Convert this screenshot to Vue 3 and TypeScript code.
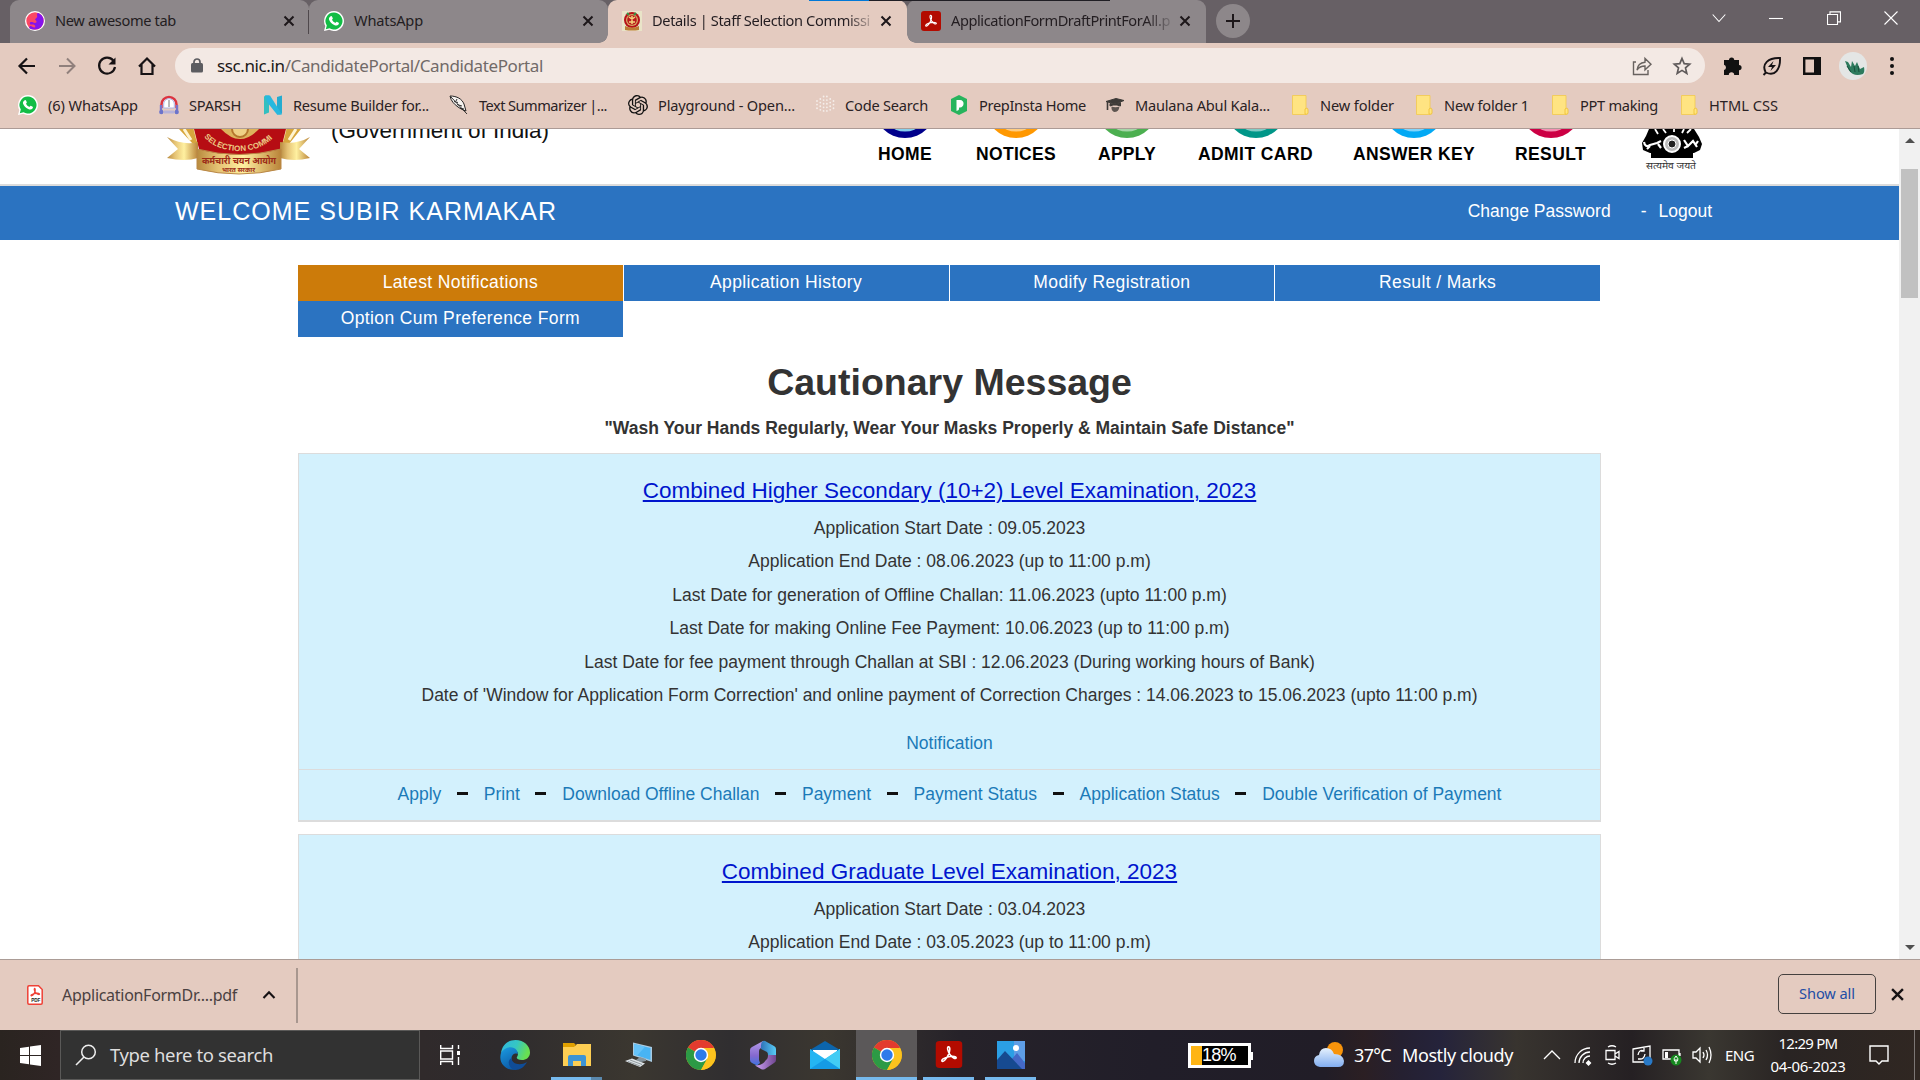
<script setup lang="ts">
import type { Directive } from 'vue'

const vFit: Directive<HTMLElement, number> = {
  mounted(el, binding) {
    const count = (el.textContent ?? '').trim().length
    el.style.letterSpacing = '0px'
    const natural = el.getBoundingClientRect().width
    if (count > 0 && binding.value) {
      el.style.letterSpacing = `${((binding.value - natural) / count).toFixed(3)}px`
    }
  },
}

interface Tab { title: string; icon: string; active?: boolean; w: number; cut?: boolean }
const tabs: Tab[] = [
  { title: 'New awesome tab', icon: 'awesome', w: 121 },
  { title: 'WhatsApp', icon: 'whatsapp', w: 69 },
  { title: 'Details | Staff Selection Commissi', icon: 'ssc', active: true, w: 218, cut: true },
  { title: 'ApplicationFormDraftPrintForAll.p', icon: 'acrobat', w: 219, cut: true },
]

interface Bookmark { label: string; icon: string; w: number; slot: number }
const bookmarks: Bookmark[] = [
  { label: '(6) WhatsApp', icon: 'whatsapp', w: 90, slot: 141 },
  { label: 'SPARSH', icon: 'sparsh', w: 52, slot: 104 },
  { label: 'Resume Builder for...', icon: 'novo', w: 136, slot: 186 },
  { label: 'Text Summarizer |...', icon: 'feather', w: 128, slot: 179 },
  { label: 'Playground - Open...', icon: 'gpt', w: 137, slot: 187 },
  { label: 'Code Search', icon: 'dots', w: 83, slot: 134 },
  { label: 'PrepInsta Home', icon: 'prep', w: 107, slot: 156 },
  { label: 'Maulana Abul Kala...', icon: 'grad', w: 135, slot: 185 },
  { label: 'New folder', icon: 'folder', w: 74, slot: 124 },
  { label: 'New folder 1', icon: 'folder', w: 85, slot: 136 },
  { label: 'PPT making', icon: 'folder', w: 78, slot: 129 },
  { label: 'HTML CSS', icon: 'folder', w: 69, slot: 110 },
]

const nav = [
  { label: 'HOME', color: '#00008b', inner: '#87ceeb', w: 54, gap: 0 },
  { label: 'NOTICES', color: '#ff9800', inner: '#ffcc80', w: 80, gap: 44 },
  { label: 'APPLY', color: '#4caf50', inner: '#a5d6a7', w: 58, gap: 42 },
  { label: 'ADMIT CARD', color: '#009688', inner: '#80cbc4', w: 115, gap: 42 },
  { label: 'ANSWER KEY', color: '#03a9f4', inner: '#81d4fa', w: 122, gap: 40 },
  { label: 'RESULT', color: '#cc0044', inner: '#f48fb1', w: 71, gap: 40 },
]

const sections = ['Latest Notifications', 'Application History', 'Modify Registration', 'Result / Marks', 'Option Cum Preference Form']

const exams = [
  {
    title: 'Combined Higher Secondary (10+2) Level Examination, 2023',
    lines: [
      'Application Start Date : 09.05.2023',
      'Application End Date : 08.06.2023 (up to 11:00 p.m)',
      'Last Date for generation of Offline Challan: 11.06.2023 (upto 11:00 p.m)',
      'Last Date for making Online Fee Payment: 10.06.2023 (up to 11:00 p.m)',
      'Last Date for fee payment through Challan at SBI : 12.06.2023 (During working hours of Bank)',
      "Date of 'Window for Application Form Correction' and online payment of Correction Charges : 14.06.2023 to 15.06.2023 (upto 11:00 p.m)",
    ],
    links: ['Apply', 'Print', 'Download Offline Challan', 'Payment', 'Payment Status', 'Application Status', 'Double Verification of Payment'],
  },
  {
    title: 'Combined Graduate Level Examination, 2023',
    lines: ['Application Start Date : 03.04.2023', 'Application End Date : 03.05.2023 (up to 11:00 p.m)'],
    links: [],
  },
]

const apps = [
  { icon: 'edge' },
  { icon: 'explorer', state: 'multi' },
  { icon: 'remote' },
  { icon: 'chrome' },
  { icon: 'm365' },
  { icon: 'mail' },
  { icon: 'chrome', state: 'active' },
  { icon: 'acrobat', state: 'open' },
  { icon: 'photos', state: 'open' },
]
</script>

<template>
  <div class="screen">
    <svg class="defs" width="0" height="0">
      <symbol id="whatsapp" viewBox="0 0 20 20">
        <path d="M10 0a10 10 0 1 1-4.8 18.8L0 20l1.300-5.100A10 10 0 0 1 10 0z" fill="#fff" />
        <path d="M10 1.500a8.500 8.500 0 1 1-4.500 15.700L1.800 18.200l1-3.600A8.500 8.500 0 0 1 10 1.500z" fill="#12bd45" />
        <path d="M6.700 5.200c.5-.4 1-.3 1.300.3l.8 1.700c.1.500-.6 1.100-.8 1.500.8 1.500 1.800 2.500 3.400 3.200.5-.4.900-1.300 1.400-1.100l1.900 1c.4.300.2 1.100-.2 1.700-1 1.200-2.500 1.300-4.300.5-2.500-1.100-4.400-3.200-5.100-5.200-.5-1.500.3-2.700 1.600-3.600z" fill="#fff" />
      </symbol>
      <symbol id="awesome" viewBox="0 0 20 20">
        <circle cx="10" cy="10" r="10" fill="#fff" /><circle cx="10" cy="10" r="8.700" fill="#fb4863" />
        <path d="M13 1.900a8.700 8.700 0 0 1-8.500 15.500c-.8-2 1.200-3 2.800-1.700 2.500 2 4-.3 2.200-1.700-1.500-1.200-4.500.5-4.700-1.600-.1-1.600 2-1.500 3.400-.9 2.800 1.200 4.500-.5 2.500-2.200C9 8 12 7 12.200 5.700 12.400 4.400 11 3 13 1.900z" fill="#8413ec" />
        <path d="M13 1.900c4 1.300 6 5 5.500 9-.5 3.500-3 6.500-7 7.600 2-2 0-3 1-4.500s2-2 1-4 2-3 0-5z" fill="#8413ec" />
      </symbol>
      <symbol id="ssc" viewBox="0 0 20 20">
        <rect width="20" height="20" fill="#e9e4c8" /><circle cx="10" cy="9" r="8" fill="#b71219" /><circle cx="10" cy="9" r="6" fill="#d8ac64" /><circle cx="10" cy="9" r="4.800" fill="#b91a1c" />
        <path d="M7 6l3 2 3-2M10 5v8M7 11h6" stroke="#f5d27d" stroke-width="1.500" fill="none" /><path d="M3 15q7 3 14 0v4q-7 1-14 0z" fill="#bd7b35" /><path d="M5 2l2 2M14 2l-2 2" stroke="#379548" stroke-width="2" />
      </symbol>
      <symbol id="acrobat" viewBox="0 0 20 20">
        <rect width="20" height="20" rx="3" fill="#b30b00" />
        <path d="M9.500 4.300c1.500-.3 1.500 3-.1 6.200-1.400 3-3.600 5-4.500 4.600-1-.7 1.300-2.900 5-3.500 3.300-.6 5.700-.1 5.400 1-.4 1.100-3-.2-4.500-2.400C9.100 8.100 8.400 4.700 9.500 4.300z" fill="none" stroke="#fff" stroke-width="1.150" />
      </symbol>
      <symbol id="sparsh" viewBox="0 0 20 20">
        <path d="M2.500 13V9.500a7.500 7.500 0 0 1 15 0V13" fill="#f4f4fb" stroke="#dc3440" stroke-width="2.500" /><path d="M2 10v5M18 10v5" stroke="#7975c9" stroke-width="2.400" /><path d="M4.700 13V9a5.300 5.300 0 0 1 10.600 0v4z" fill="#fff" stroke="#adb6e4" /><path d="M10 5v7" stroke="#777" /><circle cx="2.300" cy="17" r="2.200" fill="#6c74cb" /><circle cx="17.700" cy="17" r="2.200" fill="#6c74cb" /><path d="M5 17h10" stroke="#b6b2d9" stroke-width="3" />
      </symbol>
      <symbol id="novo" viewBox="0 0 20 20">
        <path d="M1 2q0-1.500 2-1.500h3v17l-5 2z" fill="#32bfc0" /><path d="M14 2l5-1.500v17q0 2-2 2h-3z" fill="#25acd0" /><path d="M2 .5h5l12 19h-5L4 7z" fill="#27b8df" />
      </symbol>
      <symbol id="feather" viewBox="0 0 20 20">
        <path d="M1 1c7 0 12 3 14 8l2 7c-3-1-5-2-8-4C5 9 2 6 1 1z" fill="#f6f3f0" stroke="#222" stroke-width="1" /><path d="M2 2l16 17M5 6.500l4 1M8 9.500l5 1.500M11 13l4 1M8 4l-1 2" stroke="#222" stroke-width=".9" fill="none" />
      </symbol>
      <symbol id="gpt" viewBox="0 0 24 24">
        <path fill="#111" d="M22.280 9.820a5.980 5.980 0 0 0-.52-4.910 6.050 6.050 0 0 0-6.510-2.900A6.070 6.070 0 0 0 4.980 4.180a5.980 5.980 0 0 0-4 2.900 6.050 6.050 0 0 0 .74 7.100 5.980 5.980 0 0 0 .51 4.910 6.050 6.050 0 0 0 6.510 2.900A5.980 5.980 0 0 0 13.260 24a6.060 6.060 0 0 0 5.770-4.210 5.990 5.990 0 0 0 4-2.900 6.060 6.060 0 0 0-.75-7.070zm-9.020 12.610a4.480 4.480 0 0 1-2.880-1.040l.14-.08 4.780-2.760a.8.8 0 0 0 .39-.68v-6.740l2.020 1.170a.07.07 0 0 1 .04.05v5.580a4.500 4.500 0 0 1-4.490 4.500zm-9.660-4.130a4.470 4.470 0 0 1-.53-3.010l.14.080 4.780 2.760a.77.77 0 0 0 .78 0l5.840-3.370v2.330a.08.08 0 0 1-.03.06L9.740 19.950a4.500 4.500 0 0 1-6.140-1.650zM2.340 7.900a4.490 4.490 0 0 1 2.370-1.970v5.670a.77.77 0 0 0 .39.680l5.810 3.350-2.020 1.170a.08.08 0 0 1-.07 0l-4.830-2.790A4.500 4.500 0 0 1 2.340 7.870zm16.600 3.860L13.100 8.360l2.020-1.160a.08.08 0 0 1 .07 0l4.830 2.790a4.490 4.490 0 0 1-.68 8.100v-5.680a.79.79 0 0 0-.4-.65zm2.010-3.020l-.14-.09-4.780-2.780a.78.78 0 0 0-.78 0L9.410 9.230V6.900a.07.07 0 0 1 .03-.06l4.830-2.790a4.500 4.500 0 0 1 6.680 4.660zM8.310 12.860l-2.020-1.160a.08.08 0 0 1-.04-.06V6.070a4.500 4.500 0 0 1 7.380-3.450l-.14.08L8.700 5.460a.8.8 0 0 0-.39.68zm1.100-2.360l2.600-1.500 2.610 1.500v3l-2.600 1.500-2.610-1.500z" />
      </symbol>
      <symbol id="dots" viewBox="0 0 20 20">
        <g fill="none" stroke="#f5eeea" stroke-width="1.800" stroke-linecap="round" stroke-dasharray="0.01 3.600"><path d="M2 6v10M5.300 4v14M8.600 1.500v18M11.900 1.500v18M15.200 4v14M18.500 6v10" /></g>
      </symbol>
      <symbol id="prep" viewBox="0 0 20 20">
        <path d="M10 0l8 4v12l-8 4-8-4V4z" fill="#27b45d" /><path d="M7.500 16V5h3.500c5 0 4.500 7.500 0 7.500h-.8L9.700 15z" fill="#fff" />
      </symbol>
      <symbol id="grad" viewBox="0 0 20 20">
        <path d="M1 6.500l10-3 8 2-9 3.500zM5 8.500v2.500l3-1h4l3.500 1V7.500l-5.500 2z" fill="#3d3a37" stroke="#3d3a37" stroke-width="1" /><path d="M2.500 7v8" stroke="#3d3a37" stroke-width="1.600" /><path d="M6.500 11.500q4 1.500 8 0-.5 5.500-5.500 5.500-3-1.500-2.500-5.500z" fill="#5d5550" />
      </symbol>
      <symbol id="folder" viewBox="0 0 20 20">
        <path d="M2.500.5h13.500v19H2.500z" fill="#ffe482" stroke="#f2c94c" stroke-width=".8" /><path d="M15 19v-5q3-2 3 1v3q0 2-3 1z" fill="#ffe57f" stroke="#f0c238" stroke-width=".9" />
      </symbol>
      <symbol id="edge" viewBox="0 0 30 30">
        <defs><linearGradient id="eg1" x1="0" y1="0" x2="1" y2=".3"><stop offset="0" stop-color="#30b6df" /><stop offset=".55" stop-color="#35c6c4" /><stop offset="1" stop-color="#68df51" /></linearGradient><linearGradient id="eg2" x1="0" y1="0" x2=".5" y2="1"><stop offset="0" stop-color="#1b9ce2" /><stop offset="1" stop-color="#0c59a5" /></linearGradient></defs>
        <path d="M1 13C2 5 8 0 15.500 0 24 0 30 6 30 12.500c0 5-4 7.500-8 7.500-4 0-6-1.500-5-3 2-3 1-7-4-7S4 11 1 13z" fill="url(#eg1)" />
        <path d="M1 13c3-6 12-8 15.500-3 1 1.500 1.500 3 1 4-3-1.500-6 1-6 4.500 0 5 5 9 10 8-4 4-12 5-17.500-.5C-.5 22 0 16 1 13z" fill="url(#eg2)" />
        <path d="M11.500 18c0 5.500 8 8.500 15.500 4-2.500 5-7 8-12 8-5.500-1-9-9-3.500-12z" fill="#0f4c96" />
      </symbol>
      <symbol id="explorer" viewBox="0 0 30 30">
        <path d="M1 6h12l2-2h14v22H1z" fill="#fdce53" /><path d="M1 3h11l2 2-2 2H1z" fill="#e0a000" /><path d="M6 26v-9q0-2 2-2h14q2 0 2 2v9h-5v-5h-8v5z" fill="#3d94d5" />
      </symbol>
      <symbol id="remote" viewBox="0 0 30 30">
        <path d="M9 2.500l19 4.500v15L9 15.500z" fill="#a9cbe2" /><path d="M10 4l16.500 4v12L10 14.500z" fill="#48b4f4" /><path d="M10 4l11 2.700-8 9L10 14.500z" fill="#66c3f9" /><path d="M16 17l6 2v2l-5 1-5-2z" fill="#87959e" /><path d="M1 21l7-2.500 13 5-5 3.500z" fill="#dce3e7" /><path d="M6 20l12 4.500M4 21.500l12 4.500" stroke="#929a9e" />
      </symbol>
      <symbol id="chrome" viewBox="0 0 30 30">
        <circle cx="15" cy="15" r="15" fill="#fbbc15" /><path d="M15 15L2 7.500A15 15 0 0 1 28 7.500z" fill="#e33b2e" /><path d="M2 7.500A15 15 0 0 0 15 30l6.500-11.500L15 15z" fill="#2c9a45" /><path d="M15 8h13a15 15 0 0 1-13 22l6-11z" fill="#fcc31e" /><circle cx="15" cy="15" r="7.200" fill="#fff" /><circle cx="15" cy="15" r="5.700" fill="#2d7bea" />
      </symbol>
      <symbol id="m365" viewBox="0 0 30 30">
        <defs><linearGradient id="mg1" x2="0" y2="1"><stop offset="0" stop-color="#b59be8" /><stop offset=".6" stop-color="#8468cf" /><stop offset="1" stop-color="#3e74e0" /></linearGradient><linearGradient id="mg2"><stop offset="0" stop-color="#2f73b8" /><stop offset="1" stop-color="#57cbf5" /></linearGradient><linearGradient id="mg3"><stop offset="0" stop-color="#cfa4f8" /><stop offset="1" stop-color="#6f458f" /></linearGradient></defs>
        <path d="M15 1L4 7Q2 8 2 10v10q0 2 2 3l5 2.500 3-2.500-1-3v-9q0-2 2-3l5-3V2z" fill="url(#mg1)" />
        <path d="M15 1q-2 1-2 4v4l6 3q1 1 1 3l8 5V9q0-2-2-3L17 1q-1-.5-2 0z" fill="url(#mg2)" />
        <path d="M28 15v5q0 2-2 3l-9 6q-2 1-4 0l-6-3.500q6 0 9-3l2-2.500q2-1 2-5z" fill="url(#mg3)" />
      </symbol>
      <symbol id="mail" viewBox="0 0 30 30">
        <path d="M0 10L15 1l15 9v8H0z" fill="#0c65ac" /><path d="M3 10h24v9H3z" fill="#fff" /><path d="M0 9l15 10L30 9v20H0z" fill="#24b5f2" /><path d="M15 19L30 9v20z" fill="#42ccf4" /><path d="M15 19l15 10H0z" fill="#159be5" />
      </symbol>
      <symbol id="photos" viewBox="0 0 30 30">
        <rect x="1" y="1" width="28" height="28" fill="#2b9fe5" /><path d="M18 1h11v20H18z" fill="#5e9ee6" /><path d="M15 20l6-7 8 10v6H15z" fill="#4468c6" /><path d="M1 20l8-9 17 18H1z" fill="#164a90" /><circle cx="20" cy="8" r="3" fill="#fff" />
      </symbol>
    </svg>

    <header class="chrome">
      <div class="top-strip"></div>
      <div class="tabs">
        <div v-for="tab in tabs" :key="tab.title" class="tab" :class="{ active: tab.active }">
          <svg class="fav"><use :href="'#' + tab.icon" /></svg>
          <span class="tab-title" :class="{ cut: tab.cut }"><span v-fit="tab.w" class="ui">{{ tab.title }}</span></span>
          <svg class="x" viewBox="0 0 12 12"><path d="M1.500 1.500l9 9M10.500 1.500l-9 9" stroke="#1d171a" stroke-width="2" /></svg>
        </div>
        <div class="plus"><svg width="16" height="16" viewBox="0 0 16 16"><path d="M8 1v14M1 8h14" stroke="#1d171a" stroke-width="2" /></svg></div>
        <div class="win-buttons">
          <svg viewBox="0 0 14 14"><path d="M.7 3.500L7 10.500 13.300 3.500" /></svg>
          <svg viewBox="0 0 14 14"><path d="M0 7.500h14" /></svg>
          <svg viewBox="0 0 14 14"><path d="M.5 3.500h10v10H.5zM3 3.500V.9h10.500v10H11" /></svg>
          <svg viewBox="0 0 14 14"><path d="M.5.5l13 13M13.500.5l-13 13" /></svg>
        </div>
      </div>

      <div class="toolbar">
        <svg class="tool" viewBox="0 0 20 20"><path d="M18 10H3M10 2.500L2.500 10l7.500 7.500" stroke="#161214" stroke-width="2.200" fill="none" /></svg>
        <svg class="tool" viewBox="0 0 20 20"><path d="M2 10h15M10 2.500l7.500 7.500-7.500 7.500" stroke="#90807c" stroke-width="2" fill="none" /></svg>
        <svg class="tool" viewBox="0 0 20 20"><path d="M16.300 4.500A8 8 0 1 0 18 11" stroke="#161214" stroke-width="2.200" fill="none" /><path d="M18.500 1.500V8.500h-7z" fill="#161214" /></svg>
        <svg class="tool" viewBox="0 0 20 20"><path d="M2 10.500L10 2.500l8 8M4.500 8.500V18h11V8.500" stroke="#161214" stroke-width="2.200" fill="none" /></svg>
        <div class="omnibox">
          <svg width="12" height="15" viewBox="0 0 12 15"><path d="M3 6V4a3 3 0 0 1 6 0v2" stroke="#5c5c60" stroke-width="1.700" fill="none" /><rect y="5" width="12" height="9.500" rx="1.500" fill="#5c5c60" /></svg>
          <span v-fit="326" class="ui url"><b>ssc.nic.in</b>/CandidatePortal/CandidatePortal</span>
          <span class="grow"></span>
          <svg class="omni-icon" viewBox="0 0 20 20"><path d="M4 6H1.500v12.500h14.500V14M5 14c.5-5 4-7.500 8-7.800V2.500l6 5.800-6 5.500V10c-3.500 0-6 1-8 4z" fill="none" stroke="#68625f" stroke-width="1.400" /></svg>
          <svg class="omni-icon" viewBox="0 0 20 20"><path d="M10 2.500l2.200 5.200 5.500.5-4.200 3.700 1.300 5.500-4.800-3-4.800 3 1.300-5.500L2.300 8.200l5.500-.5z" fill="none" stroke="#5f5a5a" stroke-width="1.700" /></svg>
        </div>
        <div class="ext">
          <svg viewBox="0 0 20 20"><path d="M2 4h5a2.600 2.600 0 0 1 5.200 0H17v5a2.600 2.600 0 0 1 0 5.200V19h-4.800a2.700 2.700 0 0 0-5.400 0H2v-5a2.700 2.700 0 0 0 0-5.200z" fill="#111" /></svg>
          <svg viewBox="0 0 20 20"><path d="M3.500 16C-.5 8 6 1.500 18 2c.5 11-5 19-14 14.500L1.500 19" fill="none" stroke="#161214" stroke-width="1.900" /><path d="M11.500 5L6 11h4l-1.500 4L14 9h-4z" fill="#161214" /></svg>
          <svg viewBox="0 0 20 20"><path d="M2.200 2.200h15.600v15.600H2.200z" fill="none" stroke="#111" stroke-width="2.400" /><path d="M12 1h7v18h-7z" fill="#111" /></svg>
          <svg class="avatar" viewBox="0 0 28 28"><circle cx="14" cy="14" r="14" fill="#e4e6e5" /><path d="M6 9l3 1 3 5 1-6 3 5 2-4 2 5 1 2 4-2q1 5-1 7-6 2-10 0-4-2-6-8z" fill="#2d7b5d" /><path d="M8 14l4 6M15 14l1 6M19 14l1 6" stroke="#174f3b" /></svg>
          <svg class="more" viewBox="0 0 20 20"><circle cx="10" cy="3" r="2" fill="#111" /><circle cx="10" cy="10" r="2" fill="#111" /><circle cx="10" cy="17" r="2" fill="#111" /></svg>
        </div>
      </div>

      <div class="bookmarks">
        <div v-for="b in bookmarks" :key="b.label" class="bookmark" :style="{ width: b.slot + 'px' }">
          <svg class="fav"><use :href="'#' + b.icon" /></svg><span v-fit="b.w" class="ui">{{ b.label }}</span>
        </div>
      </div>
    </header>

    <div class="viewport">
      <div class="page">
        <div class="site-head">
          <svg class="seal" width="150" height="50" viewBox="0 0 150 50">
            <defs>
              <linearGradient id="gold" x1="0" x2="1"><stop offset="0" stop-color="#b88a3e" /><stop offset=".25" stop-color="#e5c274" /><stop offset=".55" stop-color="#fff0a0" /><stop offset="1" stop-color="#b98338" /></linearGradient>
              <path id="arc" d="M39 8Q52 22 74 22Q100 22 114 2" />
            </defs>
            <path d="M14 0h20l5 14-11 1zM116 0h20l-12 15-11-1z" fill="#d7a63c" /><path d="M19 0l7 11M30 0l3 12M131 0l-7 11M120 0l-3 12" stroke="#fff4d0" stroke-width="3" />
            <path d="M29 0h92L113 32H37z" fill="#b60d13" />
            <path d="M56 0q19 20 38 0z" fill="#ddb25c" /><circle cx="75" cy="0" r="8" fill="#efd086" stroke="#b4752d" stroke-width="2" />
            <path d="M2 8q17 9 31 5v16q-13 4-31 0l11-9z" fill="url(#gold)" /><path d="M145 8q-14 8-30 5v16q14 4 30 0l-11-9z" fill="url(#gold)" />
            <path d="M32 20q42 11 84 0v20q-42 10-84 0z" fill="url(#gold)" stroke="#ba8847" />
            <text font-size="8" font-weight="700" fill="#ecca84" font-family="Liberation Sans, sans-serif"><textPath href="#arc">SELECTION COMMI</textPath></text>
            <text x="37" y="35" font-size="9" font-weight="700" fill="#9b2b17" textLength="74" lengthAdjust="spacingAndGlyphs" font-family="Noto Sans, sans-serif">कर्मचारी चयन आयोग</text>
            <text x="57" y="42.500" font-size="6" font-weight="700" fill="#9b2b17" textLength="33" lengthAdjust="spacingAndGlyphs" font-family="Noto Sans, sans-serif">भारत सरकार</text>
          </svg>
          <div class="gov"><span v-fit="218">(Government of India)</span></div>
          <nav class="nav">
            <div v-for="n in nav" :key="n.label" class="nav-item" :style="{ width: n.w + 'px', marginLeft: n.gap + 'px' }">
              <svg width="62" height="9" viewBox="0 53 62 9"><circle cx="31" cy="31" r="31" :fill="n.color" /><circle cx="31" cy="31" r="24.500" :fill="n.inner" /></svg>
              <span v-fit="n.w">{{ n.label }}</span>
            </div>
          </nav>
          <svg class="emblem" width="62" height="44" viewBox="0 0 62 44">
            <path d="M8 0h45l5 8 3 7-2 6-6 3H9l-7-3-1-7 4-7zM10 23h42v6H10z" fill="#000" />
            <path d="M14 0l3 5M22 0l3 4M33 0v3M43 0l-2 4M50 0l-4 4" stroke="#fff" stroke-width="1.800" />
            <circle cx="31" cy="15" r="8" fill="#bbb" stroke="#fff" stroke-width="2" /><circle cx="31" cy="15" r="4" fill="#222" stroke="#fff" /><path d="M3 13q1 6 6 3l7-2 4-2M9 17l-3 3M17 15l3 4M43 11l4 6 5-5 4 6M47 17l-4 2M57 12l-2 3" stroke="#fff" stroke-width="2.200" fill="none" />
            <text x="5" y="40" font-size="9" fill="#333" textLength="50" lengthAdjust="spacingAndGlyphs" font-family="Noto Sans, sans-serif">सत्यमेव जयते</text>
          </svg>
        </div>

        <div class="welcome">
          <span v-fit="382" class="welcome-name">WELCOME SUBIR KARMAKAR</span>
          <span class="grow"></span>
          <span>Change Password</span><span class="hy">-</span><span>Logout</span>
        </div>

        <main class="content">
          <div class="sections">
            <div v-for="(s, i) in sections" :key="s" class="section" :class="{ current: i === 0 }">{{ s }}</div>
          </div>
          <h1>Cautionary Message</h1>
          <p class="caution">"Wash Your Hands Regularly, Wear Your Masks Properly &amp; Maintain Safe Distance"</p>

          <article v-for="e in exams" :key="e.title" class="exam">
            <h2><a>{{ e.title }}</a></h2>
            <p v-for="l in e.lines" :key="l">{{ l }}</p>
            <template v-if="e.links.length">
              <div class="notification">Notification</div>
              <div class="links">
                <template v-for="(l, i) in e.links" :key="l"><i v-if="i > 0"></i><a>{{ l }}</a></template>
              </div>
            </template>
          </article>
        </main>
      </div>
      <div class="scrollbar">
        <svg width="10" height="5" viewBox="0 0 10 5"><path d="M5 0l5 5H0z" fill="#505050" /></svg>
        <div class="thumb"></div>
        <span class="grow"></span>
        <svg width="10" height="5" viewBox="0 0 10 5"><path d="M0 0h10L5 5z" fill="#505050" /></svg>
      </div>
    </div>

    <div class="downloads">
      <svg class="pdf" width="16" height="20" viewBox="0 0 16 20"><path d="M2 .8h9.500L15.200 4.500V18q0 1.200-1.200 1.200H2Q.8 19.200.8 18V2Q.8.800 2 .8z" fill="#fff" stroke="#ee4136" stroke-width="1.500" /><path d="M7.500 3.500c1.300 0 .7 4-1.300 6.300-1.500 1.500-3 1-1.700 0 2.500-1.700 7-2 8-.8.300 1-2 .5-3.500-1C7.500 6.500 6.800 4 7.500 3.500z" fill="none" stroke="#ee4136" stroke-width="1.300" /><text x="4.200" y="16.500" font-size="4.600" font-weight="700" font-family="Liberation Sans, sans-serif" fill="#222">PDF</text></svg>
      <span class="file"><span v-fit="175" class="ui">ApplicationFormDr....pdf</span></span>
      <svg width="14" height="10" viewBox="0 0 14 10"><path d="M1.500 8L7 2.200 12.500 8" fill="none" stroke="#161214" stroke-width="2.100" /></svg>
      <div class="divider"></div>
      <span class="grow"></span>
      <div class="show-all"><span v-fit="56" class="ui">Show all</span></div>
      <svg class="close" width="13" height="13" viewBox="0 0 12 12"><path d="M1 1l10 10M11 1L1 11" stroke="#161214" stroke-width="2.200" /></svg>
    </div>

    <footer class="taskbar">
      <div class="start"><svg width="21" height="21" viewBox="0 0 21 21"><path d="M0 3l9-1.300V10H0zM10 1.500L21 0v10H10zM0 11h9v8.300L0 18zM10 11h11v10l-11-1.500z" fill="#fff" /></svg></div>
      <div class="search">
        <svg width="22" height="22" viewBox="0 0 22 22"><circle cx="13.500" cy="8" r="6.800" fill="none" stroke="#eee" stroke-width="1.500" /><path d="M9 13L1 21" stroke="#eee" stroke-width="1.600" /></svg>
        <span v-fit="163" class="ui">Type here to search</span>
      </div>
      <div class="task-view"><svg width="20" height="20" viewBox="0 0 20 20"><path d="M.7 0v3.500h11.800V0M.7 20v-3.500h11.800V20M.7 6h11.800v8H.7zM18.500 0v4M18.500 12v8" fill="none" stroke="#fff" stroke-width="1.400" /><path d="M17 6h3v4h-3z" fill="#fff" /></svg></div>
      <div class="apps">
        <div v-for="(a, i) in apps" :key="i" class="app" :class="a.state"><svg width="30" height="30"><use :href="'#' + a.icon" :x="a.icon === 'acrobat' ? 1.5 : 0" :y="a.icon === 'acrobat' ? 1 : 0" :width="a.icon === 'acrobat' ? 27 : 30" :height="a.icon === 'acrobat' ? 27 : 30" /></svg></div>
      </div>
      <div class="battery"><div class="level"></div><div class="pct">18%</div></div>
      <div class="weather">
        <svg width="30" height="26" viewBox="0 0 30 26"><defs><linearGradient id="cl" y2="1" x2="0"><stop offset="0" stop-color="#e5f1fd" /><stop offset="1" stop-color="#81adf0" /></linearGradient></defs><circle cx="21" cy="8" r="8" fill="#f8940b" /><path d="M6 25q-6-1-6-6 0-5 5-6 1-7 7-7 6 0 8 6 9 0 10 7 0 6-6 6z" fill="url(#cl)" /></svg>
        <span v-fit="37" class="ui">37°C</span><span v-fit="111" class="ui cond">Mostly cloudy</span>
      </div>
      <div class="tray">
        <svg viewBox="0 0 20 20"><path d="M2 14l8-8 8 8" /></svg>
        <svg viewBox="0 0 20 20"><path d="M3 18A15 15 0 0 1 18 3M7 18A11 11 0 0 1 18 7M11 18a7 7 0 0 1 7-7" /><path d="M14.500 18l2-2 2 2-2 2z" fill="#fff" /></svg>
        <svg viewBox="0 0 20 20"><path d="M4 5.500h9v9H4zM13 9l4-2.500v7L13 11M6 2q4-2.500 8 0M6 18q4 2.500 8 0" /></svg>
        <svg viewBox="0 0 20 20"><path d="M1 4l17-3v16H1z" /><path d="M12 6Q7 4 6 10M7 14q5 1 6-5M12 3v3H9M6 14h4" /><circle cx="16" cy="16" r="4.500" fill="#2879c7" stroke="none" /></svg>
        <svg viewBox="0 0 20 20"><path d="M1 5h16v9H1zM18 8v3" /><path d="M3 7h3v6H3z" fill="#fff" stroke="none" /><circle cx="14" cy="15" r="5.500" fill="#16891f" stroke="none" /><path d="M14 11q-3 3-1.500 5h3Q17 14 14 11zM14 14v5" stroke-width="1" /></svg>
        <svg viewBox="0 0 20 20"><path d="M1 7v6h3l4 4V3L4 7zM11 7q2 3 0 6M14 5q3 5 0 10M17 2q4 8 0 16" /></svg>
      </div>
      <span class="lang"><span v-fit="29" class="ui">ENG</span></span>
      <div class="clock"><div><span v-fit="59" class="ui">12:29 PM</span></div><div><span v-fit="75" class="ui">04-06-2023</span></div></div>
      <svg class="note" width="20" height="20" viewBox="0 0 20 20"><path d="M1 1h18v15h-6l-3 3-3-3H1z" fill="none" stroke="#fff" stroke-width="1.400" /></svg>
      <div class="peek"></div>
    </footer>
  </div>
</template>

<style>
body { margin: 0; background: #fff; overflow: hidden; }
</style>

<style scoped>
.screen { width: 1920px; height: 1080px; overflow: hidden; display: flex; flex-direction: column; font-family: "Liberation Sans", Arial, sans-serif; }
.screen svg { flex: none; display: block; }
.screen svg.defs { position: absolute; }
.ui { font-family: "Noto Sans", "Open Sans", sans-serif; white-space: pre; }
.grow { flex: 1; }

.chrome { height: 128px; flex: none; background: #e4cbc0; border-bottom: 1px solid #ac9b96; position: relative; }
.top-strip { position: absolute; left: 809px; top: 0; width: 301px; height: 1px; background: linear-gradient(90deg, #0078d7 60px, #201e24 60px); z-index: 3; }
.tabs { height: 43px; display: flex; background: #676065; padding-left: 10px; box-sizing: border-box; }
.tab { width: 299px; height: 43px; box-sizing: border-box; padding: 0 14px 2px 15px; display: flex; align-items: center; background: #8d878a; border-radius: 9px 9px 0 0; font-size: 14.600px; color: #231d21; position: relative; }
.tab:nth-child(n+3) { padding-left: 14px; padding-right: 15px; }
.tab:first-child::after { content: ""; position: absolute; right: 0; top: 10px; width: 1px; height: 24px; background: #4f484c; }
.tab:nth-child(2) { border-bottom-right-radius: 9px; }
.tab:nth-child(4) { border-bottom-left-radius: 9px; }
.tab.active { background: #e4cbc0; z-index: 1; }
.tab.active::before, .tab.active::after { content: ""; position: absolute; bottom: 0; width: 9px; height: 9px; }
.tab.active::before { left: -9px; background: radial-gradient(circle at 0 0, #8d878a 8.500px, #e4cbc0 9px); }
.tab.active::after { right: -9px; background: radial-gradient(circle at 100% 0, #8d878a 8.500px, #e4cbc0 9px); }
.fav { width: 20px; height: 20px; }
.tab-title { flex: 1; margin-left: 10px; margin-right: 7px; white-space: nowrap; line-height: 24px; }
.tab-title.cut { -webkit-mask-image: linear-gradient(90deg, #000 88%, rgba(0, 0, 0, .15) 100%); mask-image: linear-gradient(90deg, #000 88%, rgba(0, 0, 0, .15) 100%); }
.x { width: 12px; height: 12px; }
.plus { width: 34px; height: 34px; margin: 4px 0 0 10px; border-radius: 50%; background: #8d878a; display: flex; align-items: center; justify-content: center; }
.win-buttons { margin-left: auto; margin-right: 22px; padding-top: 11px; display: flex; gap: 43.500px; }
.win-buttons svg { width: 14px; height: 14px; fill: none; stroke: #fff; stroke-width: 1.100; }

.toolbar { height: 45px; display: flex; align-items: center; padding-left: 17px; }
.tool { width: 20px; height: 20px; margin-right: 20px; }
.omnibox { width: 1530px; height: 35px; margin-left: -2px; border-radius: 18px; background: #f3e9e4; display: flex; align-items: center; box-sizing: border-box; padding: 0 13px 0 16px; }
.url { font-size: 17px; color: #716a68; margin-left: 14px; line-height: 34px; }
.url b { font-weight: 400; color: #1b1718; }
.omni-icon { width: 20px; height: 20px; margin-left: 20px; }
.ext { display: flex; align-items: center; margin-left: 17px; gap: 20px; }
.ext svg { width: 20px; height: 20px; }
.ext .avatar { width: 28px; height: 28px; margin: 0 -3px; }
.ext .more { margin-left: -2px; }

.bookmarks { height: 38px; margin-top: -2px; display: flex; align-items: center; padding-left: 18px; }
.bookmark { flex: none; display: flex; align-items: center; gap: 10px; font-size: 14.600px; color: #2a2224; white-space: nowrap; }

.viewport { height: 830px; flex: none; display: flex; overflow: hidden; }
.page { width: 1899px; background: #fff; overflow: hidden; }
.site-head { height: 55px; display: flex; box-sizing: border-box; padding-left: 165px; }
.gov { width: 547px; padding-left: 16px; font-size: 22.500px; line-height: 26px; margin-top: -11px; color: #111; white-space: nowrap; }
.nav { display: flex; font-weight: 700; font-size: 17.500px; color: #000; }
.nav-item { display: flex; flex-direction: column; align-items: center; white-space: nowrap; line-height: 32px; }
.emblem { margin-left: 55px; }
.welcome { height: 54px; border-top: 2px solid #dcdcdc; background: #2b73c1; display: flex; align-items: center; padding: 0 187px 0 175px; color: #fff; font-size: 17.500px; white-space: nowrap; line-height: 52px; }
.welcome > span { position: relative; top: -2px; }
.welcome-name { font-size: 25px; }
.hy { margin: 0 12px 0 30px; }

.content { width: 1303px; margin-left: 298px; padding-top: 25px; text-align: center; }
.sections { width: 1303px; display: flex; flex-wrap: wrap; }
.section { width: 25%; height: 36px; box-sizing: border-box; border-right: 1px solid #fff; background: #2b73c1; background-clip: padding-box; color: #fff; font-size: 17.500px; letter-spacing: .38px; line-height: 34px; }
.section.current { background-color: #cc7b0a; }
h1 { margin: 21px 0 0; font-size: 37.500px; line-height: 48px; color: #333; }
.caution { margin: -1px 0 2px; font-size: 17.500px; font-weight: 700; line-height: 46px; color: #333; }
.exam { border: 1px solid #dcdcdc; border-bottom-width: 2px; background: #d3f1fd; padding-top: 17px; margin-bottom: 12px; color: #333; font-size: 17.500px; }
.exam h2 { margin: 0 0 1px; font-weight: 400; font-size: 22.500px; line-height: 40px; color: #0015cd; }
.exam h2 a { text-decoration: underline; text-decoration-thickness: 2px; text-underline-offset: 2px; }
.exam p { margin: 0; line-height: 33.450px; }
.notification { margin-top: 4px; line-height: 52px; color: #1b7ab8; }
.links { border-top: 1px solid #dcdcdc; display: flex; justify-content: center; align-items: center; height: 50px; color: #1b7ab8; white-space: nowrap; }
.links i { width: 11px; height: 3px; margin: -2px 16px 0 15.500px; background: #111; }

.scrollbar { width: 21px; background: #f1f1f1; display: flex; flex-direction: column; align-items: center; padding: 9px 0 9px; box-sizing: border-box; }
.thumb { width: 17px; height: 129px; margin-top: 26px; background: #c1c1c1; }

.downloads { height: 71px; flex: none; box-sizing: border-box; border-top: 1px solid #ab9c96; background: #e4cbc0; display: flex; align-items: center; padding-left: 27px; }
.file { width: 200px; margin-left: 19px; font-size: 16px; color: #4a4141; }
.divider { width: 2px; height: 55px; margin-left: 20px; background: #a8978f; }
.show-all { width: 98px; height: 40px; box-sizing: border-box; margin-top: -2px; border: 1px solid #45413f; border-radius: 5px; color: #224da5; font-size: 14.600px; line-height: 37px; text-align: center; }
.close { margin: -2px 16px 0 15px; }

.taskbar { height: 50px; flex: none; display: flex; align-items: center; color: #fff; background: linear-gradient(90deg, #2a2420 0, #2f2525 3%, #302a2b 22%, #2e2b2d 26%, #3b3730 33%, #302e30 38%, #3b3730 43%, #262229 50%, #211e29 60%, #211d27 69%, #2b1f23 71%, #252031 73%, #25233b 75%, #38342f 79%, #252023 85%, #3a3731 89%, #292423 93%, #302722 100%); }
.start { width: 60px; padding-left: 20px; box-sizing: border-box; }
.search { width: 360px; height: 50px; box-sizing: border-box; border: 1px solid #5a5958; background: #323232; display: flex; align-items: center; padding-left: 14px; gap: 13px; font-size: 18.500px; color: #dedede; line-height: 48px; }
.search .ui { margin-top: -1px; }
.task-view { width: 64px; padding-left: 20px; box-sizing: border-box; }
.apps { display: flex; width: 703px; }
.app { width: 61px; height: 50px; margin-right: 1px; display: flex; align-items: center; justify-content: center; position: relative; }
.app.active { background: #5b5859; }
.app.multi::after, .app.open::after, .app.active::after { content: ""; position: absolute; bottom: 0; left: 5px; right: 5px; height: 3px; background: #76b9ed; }
.app.active::after { left: 0; right: 0; }
.app.multi::after { background: linear-gradient(90deg, #76b9ed 40px, #5a88ad 40px); }
.battery { width: 63px; height: 25px; box-sizing: border-box; border: 3px solid #fff; background: #000; display: flex; margin-left: 1px; position: relative; }
.battery::after { content: ""; position: absolute; right: -5px; top: 6px; width: 2px; height: 8px; background: #fff; }
.level { width: 11px; background: #ffb515; }
.pct { font-size: 18px; line-height: 19px; margin-left: 0; letter-spacing: -.7px; }
.weather { margin-left: 63px; display: flex; align-items: center; font-size: 18px; line-height: 48px; }
.weather .ui { margin-left: 10px; }
.weather .cond { margin-left: 11px; }
.tray { margin-left: 29px; display: flex; gap: 10px; }
.tray svg { width: 20px; height: 20px; fill: none; stroke: #fff; stroke-width: 1.300; overflow: visible; }
.lang { width: 30px; margin-left: 13px; font-size: 15px; }
.clock { width: 90px; margin-left: 8px; text-align: center; font-size: 15px; line-height: 23px; }
.note { margin-left: 16px; }
.peek { margin-left: auto; width: 5px; height: 50px; border-left: 1px solid #7c7775; }
</style>
